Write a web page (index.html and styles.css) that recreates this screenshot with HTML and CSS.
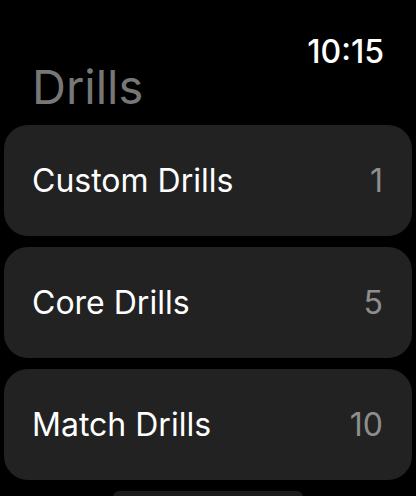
FILE: index.html
```html
<!DOCTYPE html>
<html lang="en">
<head>
    <meta charset="UTF-8">
    <meta name="viewport" content="width=device-width, initial-scale=1.0">
    <title>Drills</title>
    <link rel="stylesheet" href="styles.css">
</head>
<body>
    <div class="status-bar">
        <span class="time">10:15</span>
    </div>
    <h1 class="title">Drills</h1>
    <div class="drill-list">
        <div class="drill-row">
            <span class="drill-name">Custom Drills</span>
            <span class="drill-count">1</span>
        </div>
        <div class="drill-row">
            <span class="drill-name">Core Drills</span>
            <span class="drill-count">5</span>
        </div>
        <div class="drill-row">
            <span class="drill-name">Match Drills</span>
            <span class="drill-count">10</span>
        </div>
        <div class="more-button"></div>
    </div>
</body>
</html>
```

FILE: styles.css
```css
body {
    font-family: Inter, "Noto Sans", sans-serif;
    background-color: #000;
    color: #fff;
    margin: 0;
    padding: 0;
    width: 416px;
    height: 496px;
    overflow: hidden;
}

.status-bar {
    display: flex;
    justify-content: flex-end;
    padding: 39px 32px 0 0;
}

.time {
    font-size: 32px;
    font-weight: 500;
    line-height: 26px;
}

.title {
    margin: 0 0 16px 0;
    padding-left: 32px;
    font-size: 47px;
    font-weight: 400;
    line-height: 44px;
    color: #777;
}

.drill-list {
    display: flex;
    flex-direction: column;
    align-items: center;
    gap: 11px;
    padding: 0 4px;
}

.drill-row {
    width: 100%;
    box-sizing: border-box;
    height: 111px;
    display: flex;
    align-items: center;
    justify-content: space-between;
    padding: 0 29px 0 28px;
    background-color: #222;
    border-radius: 24px;
}

.drill-name {
    font-size: 32px;
}

.drill-count {
    font-size: 32px;
    color: #8e8e8e;
}

.more-button {
    width: 190px;
    height: 6px;
    background-color: #1b1b1b;
    border-radius: 22px 22px 0 0;
}
```
